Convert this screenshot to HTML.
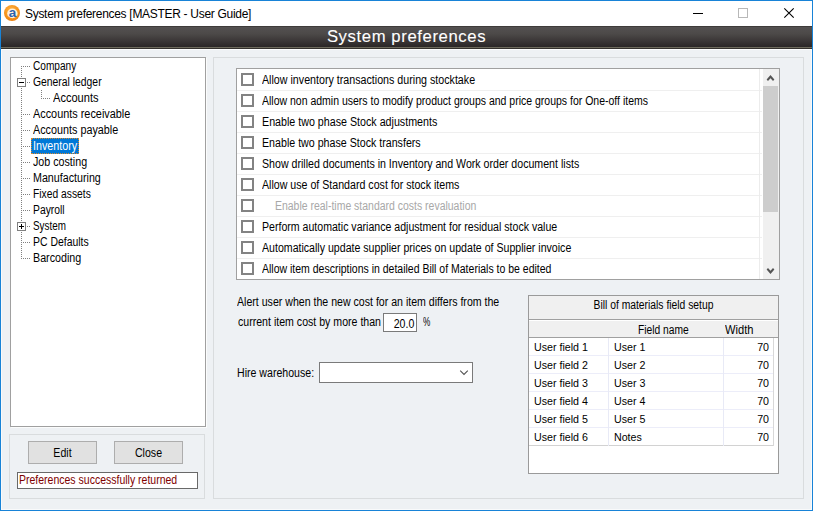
<!DOCTYPE html>
<html>
<head>
<meta charset="utf-8">
<title>System preferences</title>
<style>
html,body{margin:0;padding:0;}
body{width:813px;height:511px;overflow:hidden;background:#eef1f4;font-family:"Liberation Sans",sans-serif;font-size:12.5px;color:#000;position:relative;}
.abs{position:absolute;box-sizing:border-box;}
#win{left:0;top:0;width:813px;height:511px;border:1px solid #1883d7;}
#inner{left:1px;top:49px;width:811px;height:461px;border:1px solid #f9fafb;border-top:none;}
#titlebar{left:1px;top:1px;width:811px;height:25px;background:#fff;}
#title{left:24px;top:5.5px;font-size:12px;letter-spacing:-0.3px;white-space:nowrap;line-height:15px;}
#banner{left:1px;top:26px;width:811px;height:24px;background:#fcfdfd;}
#bg1{left:0;top:0;width:811px;height:21px;background:linear-gradient(#3e3b3a 0px,#3e3b3a 1px,#535050 1.5px,#4c4948 8px,#3a3636 15px,#2a2626 21px);}
#bg2{left:0;top:21px;width:811px;height:1px;background:#6e6b5d;}
#bg3{left:0;top:22px;width:811px;height:1px;background:#34312d;}
#bannertext{left:0;top:0;width:811px;text-align:center;color:#fff;font-size:16.7px;letter-spacing:0.6px;line-height:22px;white-space:nowrap;-webkit-text-stroke:0.1px #fff;}
.t{position:absolute;display:block;white-space:nowrap;transform:scaleX(0.847);transform-origin:0 50%;line-height:16px;height:16px;}
.tc{position:absolute;display:block;white-space:nowrap;transform:scaleX(0.847);transform-origin:50% 50%;line-height:16px;height:16px;text-align:center;}
.tr{position:absolute;display:block;white-space:nowrap;transform:scaleX(0.847);transform-origin:100% 50%;line-height:16px;height:16px;text-align:right;}
#tree{left:10px;top:57px;width:196px;height:370px;background:#fff;border:1px solid #a0a0a0;box-shadow:1px 1px 0 #fbfcfc;}
#botleft{left:9px;top:434px;width:196px;height:65px;border:1px solid #d9dcde;}
.btn{background:#e1e1e1;border:1px solid #adadad;height:23px;width:69px;}
#status{left:17px;top:472px;width:181px;height:17px;background:#fff;border:1px solid #696969;color:#800000;}
#right{left:213px;top:57px;width:591px;height:442px;border:1px solid #d9dcde;}
#list{left:236px;top:68px;width:544px;height:212px;background:#fff;border:1px solid #a0a0a0;}
.row{position:absolute;left:237px;width:525px;height:22px;border-bottom:1px solid #efefef;box-sizing:border-box;}
.cb{position:absolute;left:4px;top:4px;width:13px;height:13px;box-sizing:border-box;border:2px solid #838383;background:#fff;}
.dis{color:#a8a8a8;}
#grid{left:528px;top:295px;width:251px;height:179px;background:#fff;border:1px solid #9a9a9a;}
.g{position:absolute;font-size:10.67px;line-height:19px;height:17px;white-space:nowrap;}
</style>
</head>
<body>
<div id="win" class="abs"></div><div id="inner" class="abs"></div>
<div id="titlebar" class="abs">
  <svg class="abs" style="left:2px;top:3px" width="18" height="18" viewBox="0 0 18 18">
    <defs><radialGradient id="og" cx="0.45" cy="0.35" r="0.7"><stop offset="0" stop-color="#ffb84a"/><stop offset="0.6" stop-color="#f7941d"/><stop offset="1" stop-color="#e87b0c"/></radialGradient></defs>
    <circle cx="9" cy="9" r="8" fill="url(#og)"/>
    <ellipse cx="9.4" cy="9.4" rx="5.2" ry="4.9" fill="#fff1dc"/>
    <text x="0" y="0" transform="translate(9.4,12.9) scale(1.12,1)" font-family="Liberation Sans" font-size="12" font-weight="bold" fill="#2c62ad" text-anchor="middle">a</text>
  </svg>
  <div id="title" class="abs">System preferences [MASTER - User Guide]</div>
  <svg class="abs" style="left:686px;top:0" width="125" height="25" viewBox="0 0 125 25">
    <path d="M6 12.5H16" stroke="#000" stroke-width="1" fill="none"/>
    <rect x="51.5" y="7.5" width="9" height="9" stroke="#b8b8b8" stroke-width="1" fill="none"/>
    <path d="M97.3 7.3L106.7 16.7M106.7 7.3L97.3 16.7" stroke="#000" stroke-width="1.1" fill="none"/>
  </svg>
</div>
<div id="banner" class="abs"><div id="bg1" class="abs"></div><div id="bg2" class="abs"></div><div id="bg3" class="abs"></div><div id="bannertext" class="abs">System preferences</div></div>
<div id="tree" class="abs"></div>
<svg class="abs" style="left:0;top:0" width="210" height="430" viewBox="0 0 210 430" shape-rendering="crispEdges">
<path d="M21.5 66V259" stroke="#808080" stroke-width="1" stroke-dasharray="1 1" fill="none"/>
<path d="M21 66.5H30" stroke="#808080" stroke-width="1" stroke-dasharray="1 1" fill="none"/>
<path d="M21 82.5H30" stroke="#808080" stroke-width="1" stroke-dasharray="1 1" fill="none"/>
<rect x="17.5" y="78.5" width="8" height="8" fill="#fff" stroke="#808080" stroke-dasharray="none"/>
<path d="M19 82.5H24" stroke="#000" fill="none"/>
<path d="M41.5 90V98" stroke="#808080" stroke-width="1" stroke-dasharray="1 1" fill="none"/>
<path d="M41 98.5H50" stroke="#808080" stroke-width="1" stroke-dasharray="1 1" fill="none"/>
<path d="M21 114.5H30" stroke="#808080" stroke-width="1" stroke-dasharray="1 1" fill="none"/>
<path d="M21 130.5H30" stroke="#808080" stroke-width="1" stroke-dasharray="1 1" fill="none"/>
<path d="M21 146.5H30" stroke="#808080" stroke-width="1" stroke-dasharray="1 1" fill="none"/>
<path d="M21 162.5H30" stroke="#808080" stroke-width="1" stroke-dasharray="1 1" fill="none"/>
<path d="M21 178.5H30" stroke="#808080" stroke-width="1" stroke-dasharray="1 1" fill="none"/>
<path d="M21 194.5H30" stroke="#808080" stroke-width="1" stroke-dasharray="1 1" fill="none"/>
<path d="M21 210.5H30" stroke="#808080" stroke-width="1" stroke-dasharray="1 1" fill="none"/>
<path d="M21 226.5H30" stroke="#808080" stroke-width="1" stroke-dasharray="1 1" fill="none"/>
<rect x="17.5" y="222.5" width="8" height="8" fill="#fff" stroke="#808080" stroke-dasharray="none"/>
<path d="M19 226.5H24" stroke="#000" fill="none"/>
<path d="M21.5 224V229" stroke="#000" fill="none"/>
<path d="M21 242.5H30" stroke="#808080" stroke-width="1" stroke-dasharray="1 1" fill="none"/>
<path d="M21 258.5H30" stroke="#808080" stroke-width="1" stroke-dasharray="1 1" fill="none"/>
</svg>
<span class="t" style="left:33.2px;top:58px;transform:scaleX(0.8093);">Company</span>
<span class="t" style="left:33.2px;top:74px;transform:scaleX(0.8295);">General ledger</span>
<span class="t" style="left:53px;top:90px;transform:scaleX(0.8848);">Accounts</span>
<span class="t" style="left:33.2px;top:106px;transform:scaleX(0.8697);">Accounts receivable</span>
<span class="t" style="left:33.2px;top:122px;transform:scaleX(0.8633);">Accounts payable</span>
<div class="abs" style="left:31px;top:138px;width:48px;height:16px;background:#0078d7;outline:1px dotted #d88a30;outline-offset:-1px"></div><span class="t" style="left:33.2px;top:138px;color:#fff;transform:scaleX(0.8576);">Inventory</span>
<span class="t" style="left:33.2px;top:154px;transform:scaleX(0.8555);">Job costing</span>
<span class="t" style="left:33.2px;top:170px;transform:scaleX(0.8559);">Manufacturing</span>
<span class="t" style="left:33.2px;top:186px;transform:scaleX(0.8237);">Fixed assets</span>
<span class="t" style="left:33.2px;top:202px;transform:scaleX(0.8268);">Payroll</span>
<span class="t" style="left:33.2px;top:218px;transform:scaleX(0.7892);">System</span>
<span class="t" style="left:33.2px;top:234px;transform:scaleX(0.8350);">PC Defaults</span>
<span class="t" style="left:33.2px;top:250px;transform:scaleX(0.8580);">Barcoding</span>
<div id="botleft" class="abs"></div>
<div class="abs btn" style="left:28px;top:441px;"><span class="tc" style="left:0;width:67px;top:3px">Edit</span></div>
<div class="abs btn" style="left:114px;top:441px;"><span class="tc" style="left:0;width:67px;top:3px">Close</span></div>
<div id="status" class="abs"><span class="t" style="left:0.7px;top:-1px;transform:scaleX(0.8402);">Preferences successfully returned</span></div>
<div id="right" class="abs"></div>
<div id="list" class="abs"></div>
<div class="row" style="top:69px"><div class="cb"></div><span class="t" style="left:25px;top:3px;transform:scaleX(0.8543);">Allow inventory transactions during stocktake</span></div>
<div class="row" style="top:90px"><div class="cb"></div><span class="t" style="left:25px;top:3px;transform:scaleX(0.8396);">Allow non admin users to modify product groups and price groups for One-off items</span></div>
<div class="row" style="top:111px"><div class="cb"></div><span class="t" style="left:25px;top:3px;transform:scaleX(0.8552);">Enable two phase Stock adjustments</span></div>
<div class="row" style="top:132px"><div class="cb"></div><span class="t" style="left:25px;top:3px;transform:scaleX(0.8522);">Enable two phase Stock transfers</span></div>
<div class="row" style="top:153px"><div class="cb"></div><span class="t" style="left:25px;top:3px;transform:scaleX(0.8491);">Show drilled documents in Inventory and Work order document lists</span></div>
<div class="row" style="top:174px"><div class="cb"></div><span class="t" style="left:25px;top:3px;transform:scaleX(0.8503);">Allow use of Standard cost for stock items</span></div>
<div class="row" style="top:195px"><div class="cb"></div><span class="t dis" style="left:38px;top:3px;transform:scaleX(0.8373);">Enable real-time standard costs revaluation</span></div>
<div class="row" style="top:216px"><div class="cb"></div><span class="t" style="left:25px;top:3px;transform:scaleX(0.8464);">Perform automatic variance adjustment for residual stock value</span></div>
<div class="row" style="top:237px"><div class="cb"></div><span class="t" style="left:25px;top:3px;transform:scaleX(0.8478);">Automatically update supplier prices on update of Supplier invoice</span></div>
<div class="row" style="top:258px;border-bottom:none"><div class="cb"></div><span class="t" style="left:25px;top:3px;transform:scaleX(0.8398);">Allow item descriptions in detailed Bill of Materials to be edited</span></div>
<div class="abs" style="left:759px;top:69px;width:1px;height:210px;background:#ececec"></div>
<div class="abs" style="left:763px;top:69px;width:16px;height:210px;background:#f0f0f0"></div>
<div class="abs" style="left:763px;top:86px;width:15px;height:126px;background:#cdcdcd"></div>
<svg class="abs" style="left:763px;top:69px" width="16" height="210" viewBox="0 0 16 210">
<polygon points="3.6,10.4 7.5,6.0 11.4,10.4 10.0,12.0 7.5,9.2 5.0,12.0" fill="#555"/>
<polygon points="3.6,200.6 7.5,205.0 11.4,200.6 10.0,199.0 7.5,201.8 5.0,199.0" fill="#555"/>
</svg>
<span class="t" style="left:237px;top:294px">Alert user when the new cost for an item differs from the</span>
<span class="t" style="left:238px;top:314px">current item cost by more than</span>
<div class="abs" style="left:383px;top:313px;width:34px;height:19px;background:#fff;border:1px solid #7a7a7a"><span class="tr" style="right:1.6px;top:1.5px">20.0</span></div>
<span class="t" style="left:422.8px;top:314px;transform:scaleX(0.6562);">%</span>
<span class="t" style="left:237px;top:365px">Hire warehouse:</span>
<div class="abs" style="left:319px;top:362px;width:154px;height:21px;background:#fff;border:1px solid #7a7a7a"></div>
<svg class="abs" style="left:455px;top:363px" width="17" height="19" viewBox="0 0 17 19"><path d="M5.2 7.6L9 11.4L12.8 7.6" stroke="#505050" stroke-width="1.05" fill="none"/></svg>
<div id="grid" class="abs"></div>
<div class="abs" style="left:529px;top:296px;width:249px;height:24px;background:#f0f0f0;border-bottom:1px solid #a0a0a0"></div>
<div class="abs" style="left:529px;top:320px;width:249px;height:18px;background:#f0f0f0;border-top:1px solid #fff;border-bottom:1px solid #a0a0a0"></div>
<span class="tc" style="left:529px;width:249px;top:297px;transform:scaleX(0.826)">Bill of materials field setup</span>
<span class="t" style="left:638.4px;top:322px;transform:scaleX(0.8214);">Field name</span>
<span class="t" style="left:725px;top:322px;transform:scaleX(0.8919);">Width</span>
<div class="abs" style="left:529px;top:355px;width:245px;height:1px;background:#ecedf9"></div><span class="g" style="left:534px;top:338px">User field 1</span><span class="g" style="left:614px;top:338px">User 1</span><span class="g" style="left:724px;width:45px;text-align:right;top:338px">70</span>
<div class="abs" style="left:529px;top:373px;width:245px;height:1px;background:#ecedf9"></div><span class="g" style="left:534px;top:356px">User field 2</span><span class="g" style="left:614px;top:356px">User 2</span><span class="g" style="left:724px;width:45px;text-align:right;top:356px">70</span>
<div class="abs" style="left:529px;top:391px;width:245px;height:1px;background:#ecedf9"></div><span class="g" style="left:534px;top:374px">User field 3</span><span class="g" style="left:614px;top:374px">User 3</span><span class="g" style="left:724px;width:45px;text-align:right;top:374px">70</span>
<div class="abs" style="left:529px;top:409px;width:245px;height:1px;background:#ecedf9"></div><span class="g" style="left:534px;top:392px">User field 4</span><span class="g" style="left:614px;top:392px">User 4</span><span class="g" style="left:724px;width:45px;text-align:right;top:392px">70</span>
<div class="abs" style="left:529px;top:427px;width:245px;height:1px;background:#ecedf9"></div><span class="g" style="left:534px;top:410px">User field 5</span><span class="g" style="left:614px;top:410px">User 5</span><span class="g" style="left:724px;width:45px;text-align:right;top:410px">70</span>
<div class="abs" style="left:529px;top:445px;width:245px;height:1px;background:#d2d2d2"></div><span class="g" style="left:534px;top:428px">User field 6</span><span class="g" style="left:614px;top:428px">Notes</span><span class="g" style="left:724px;width:45px;text-align:right;top:428px">70</span>
<div class="abs" style="left:608px;top:338px;width:1px;height:108px;background:#e8eaf6"></div><div class="abs" style="left:723px;top:338px;width:1px;height:108px;background:#e8eaf6"></div><div class="abs" style="left:773px;top:338px;width:1px;height:108px;background:#d8d8d8"></div>
</body>
</html>
